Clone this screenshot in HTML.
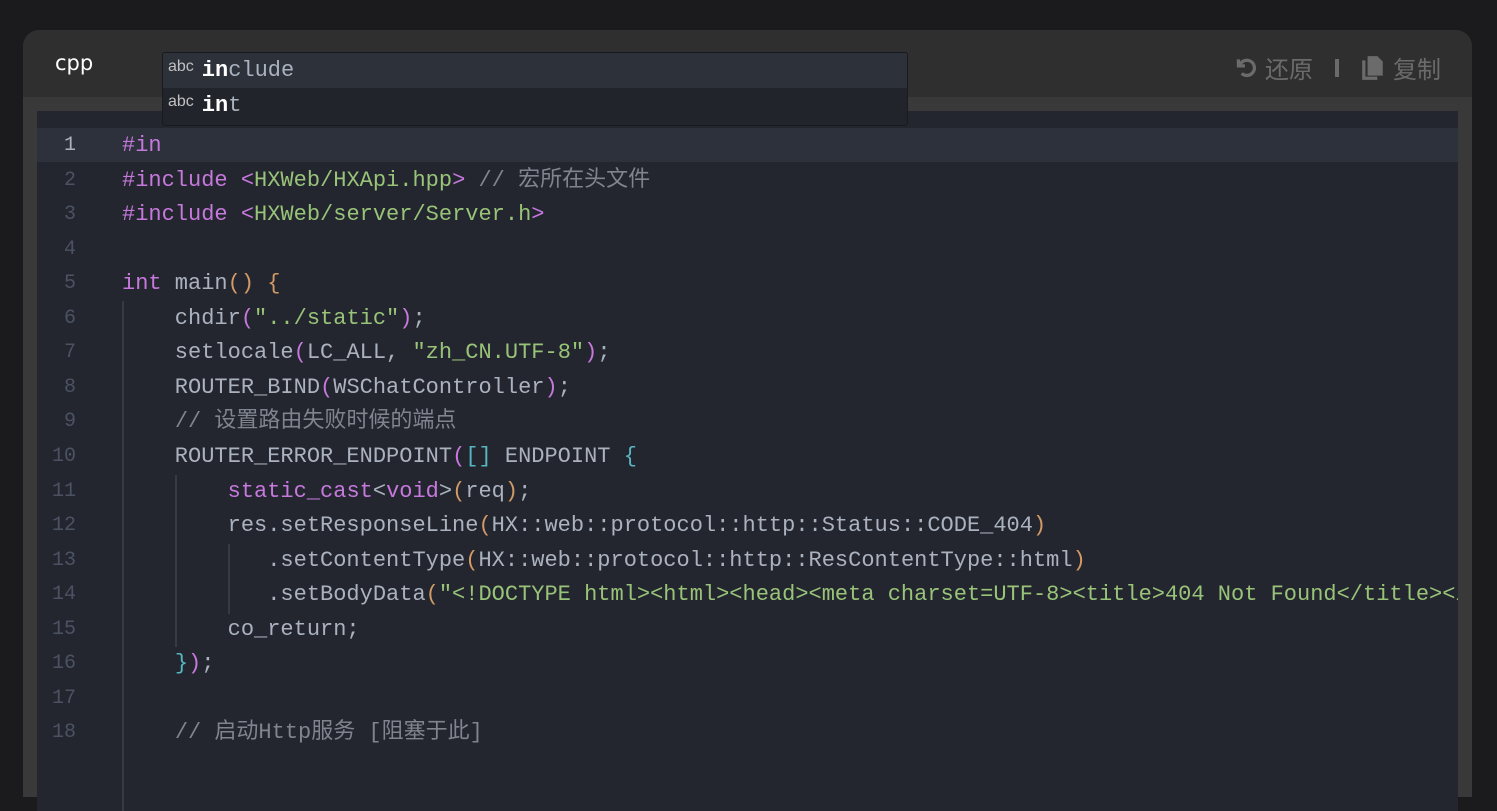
<!DOCTYPE html>
<html><head><meta charset="utf-8"><style>
body{margin:0;width:1497px;height:742px;overflow:hidden;background:#1b1b1d;font-family:"Liberation Mono","Noto Sans CJK SC",monospace;}
.card{position:absolute;left:23px;top:30px;width:1449px;height:760px;background:#2f2f2f;border-radius:16px 16px 0 0;}
.band{position:absolute;left:23px;top:97px;width:1449px;height:700px;background:#393939;}
.ed{position:absolute;left:37px;top:111px;width:1421px;height:700px;background:#23262e;overflow:hidden;}
.hl{position:absolute;left:0;top:17px;width:1421px;height:34px;background:#2c313c;}
.ln{position:absolute;left:0;width:39px;text-align:right;color:#4b5263;font-size:20px;height:34px;line-height:34px;}
.cl{position:absolute;left:85px;white-space:pre;color:#abb2bf;font-size:22px;height:34px;line-height:34px;}
.g{position:absolute;width:2px;background:#353a44;}
.k{color:#c678dd}.s{color:#98c379}.p{color:#d19a66}.b{color:#56b6c2}.c{color:#7f848e}
.cpp{position:absolute;left:55px;top:51px;color:#fff;font-family:"DejaVu Sans",sans-serif;font-size:21px;}
.tools{position:absolute;top:50px;right:56px;color:#6b6b6b;font-family:"Liberation Sans","Noto Sans CJK SC",sans-serif;font-size:24px;display:flex;align-items:center;}
.ac{position:absolute;left:162px;top:52px;width:744px;height:72px;background:#21252b;border:1px solid #181a1f;border-radius:3px;overflow:hidden;}
.ac div{height:35px;line-height:35px;color:#abb2bf;font-size:22px;white-space:pre;}
.ac .sel{background:#2c313a;}
.ac span.t{font-family:"Liberation Sans",sans-serif;font-size:16px;color:#c0c0c0;margin:0 8px 0 5px;position:relative;top:-5px}
.ac b{color:#fff}
</style></head><body>
<div class="card"></div><div class="band"></div>
<div class="cpp">cpp</div>
<div class="tools">
<svg width="26" height="26" viewBox="0 0 24 24"><path d="M5 4v6h6" fill="none" stroke="#6b6b6b" stroke-width="3"/><path d="M6 10a7 7 0 1 1 2 7" fill="none" stroke="#6b6b6b" stroke-width="3"/></svg>
<span style="margin-left:6px">还原</span>
<span style="display:inline-block;width:4px;height:18px;background:#6b6b6b;margin:0 22px"></span>
<svg width="24" height="26" viewBox="0 0 22 24"><path d="M1 5h3v15h11v3H1z" fill="#6b6b6b"/><path d="M6 1h9l5 5v13H6z" fill="#6b6b6b"/></svg>
<span style="margin-left:8px">复制</span>
</div>
<div class="ed">
<div class="hl"></div>
<div class="g" style="left:85px;top:190px;height:520px"></div>
<div class="g" style="left:138px;top:364px;height:172px"></div>
<div class="g" style="left:191px;top:433px;height:70px"></div>
<div id="lines"></div>
</div>
<div class="ac">
<div class="sel"><span class="t">abc</span><b>in</b>clude</div>
<div><span class="t">abc</span><b>in</b>t</div>
</div>
<script>
var L=[
'<span class="k">#in</span>',
'<span class="k">#include</span> <span class="k">&lt;</span><span class="s">HXWeb/HXApi.hpp</span><span class="k">&gt;</span> <span class="c">// 宏所在头文件</span>',
'<span class="k">#include</span> <span class="k">&lt;</span><span class="s">HXWeb/server/Server.h</span><span class="k">&gt;</span>',
'',
'<span class="k">int</span> main<span class="p">()</span> <span class="p">{</span>',
'    chdir<span class="k">(</span><span class="s">"../static"</span><span class="k">)</span>;',
'    setlocale<span class="k">(</span>LC_ALL, <span class="s">"zh_CN.UTF-8"</span><span class="k">)</span>;',
'    ROUTER_BIND<span class="k">(</span>WSChatController<span class="k">)</span>;',
'    <span class="c">// 设置路由失败时候的端点</span>',
'    ROUTER_ERROR_ENDPOINT<span class="k">(</span><span class="b">[]</span> ENDPOINT <span class="b">{</span>',
'        <span class="k">static_cast</span>&lt;<span class="k">void</span>&gt;<span class="p">(</span>req<span class="p">)</span>;',
'        res.setResponseLine<span class="p">(</span>HX::web::protocol::http::Status::CODE_404<span class="p">)</span>',
'           .setContentType<span class="p">(</span>HX::web::protocol::http::ResContentType::html<span class="p">)</span>',
'           .setBodyData<span class="p">(</span><span class="s">"&lt;!DOCTYPE html&gt;&lt;html&gt;&lt;head&gt;&lt;meta charset=UTF-8&gt;&lt;title&gt;404 Not Found&lt;/title&gt;&lt;/head&gt;</span>',
'        co_return;',
'    <span class="b">}</span><span class="k">)</span>;',
'',
'    <span class="c">// 启动Http服务 [阻塞于此]</span>'
];
var h='';
for(var i=0;i<L.length;i++){var y=17+i*34.55;
h+='<div class="ln" style="top:'+(y+1)+'px;'+(i==0?'color:#abb2bf':'')+'">'+(i+1)+'</div>';
h+='<div class="cl" style="top:'+(y+1)+'px">'+L[i]+'</div>';}
document.getElementById('lines').innerHTML=h;
</script>
</body></html>
